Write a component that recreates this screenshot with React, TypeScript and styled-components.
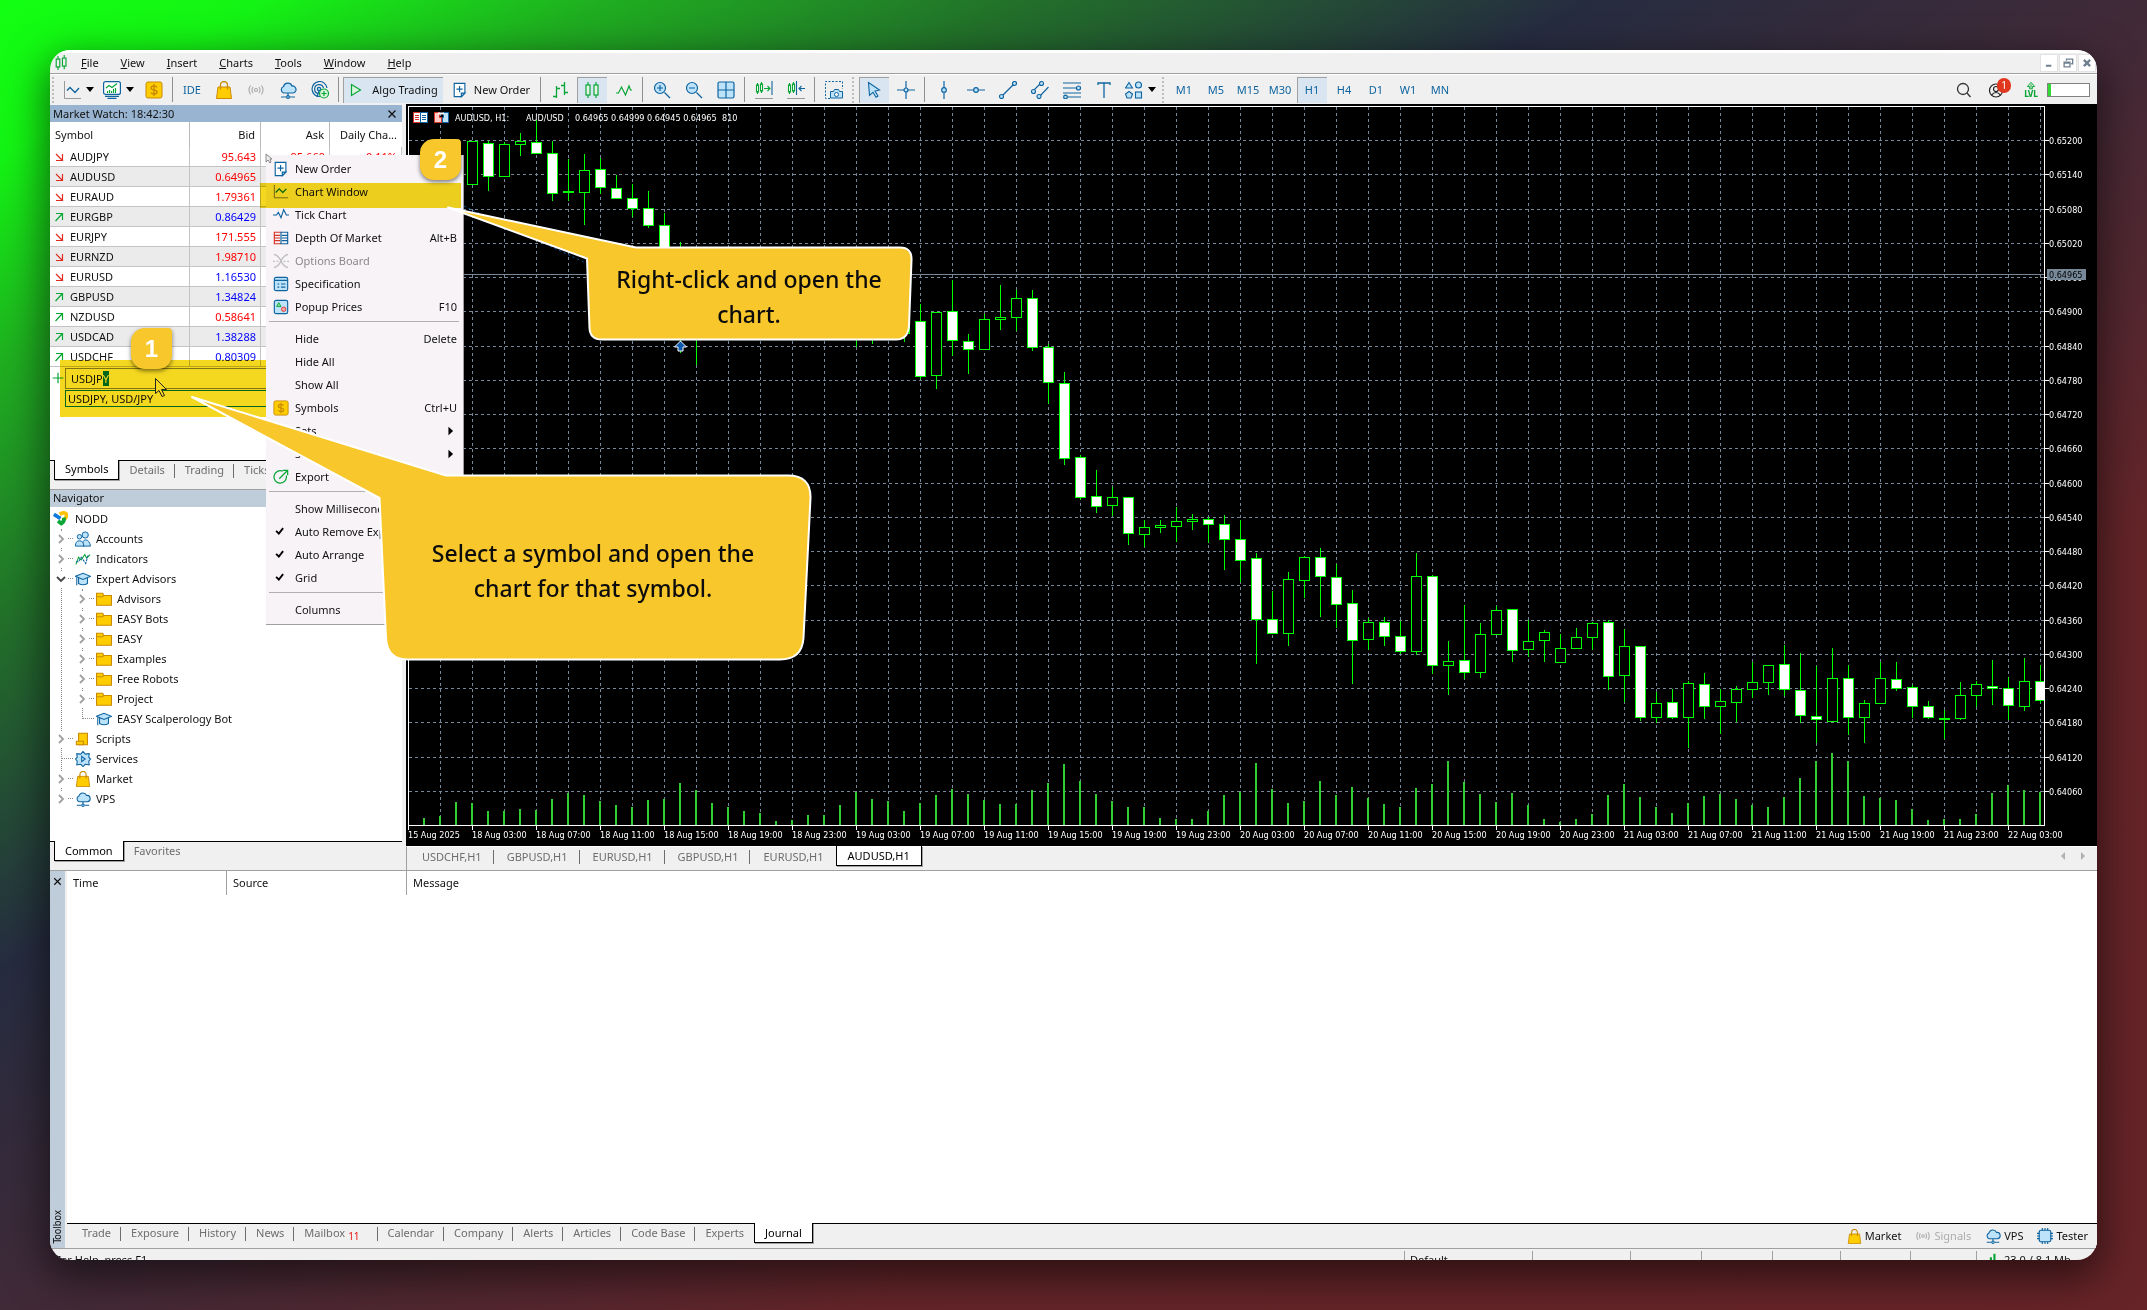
import React, { useEffect, useRef } from "react";
import styled, { createGlobalStyle, css } from "styled-components";

const UI_FONT = `"Noto Sans", "Open Sans", sans-serif`;
const CHART_FONT = `"DejaVu Sans Condensed", "DejaVu Sans", sans-serif`;
const BLUE = "#0f64a0";
const SKY = "#bde3fb";
const GREEN = "#08a537";
const GOLD = "#ffcc00";
const AMBER = "#c98a06";
const FACE = "#f0f0f0";

const GlobalStyle = createGlobalStyle`
  * { box-sizing: border-box; }
  body { margin: 0; }
  button, input { font: inherit; color: inherit; border: 0; padding: 0; margin: 0; background: none; }
  ul { list-style: none; margin: 0; padding: 0; }
  table { border-spacing: 0; border-collapse: separate; }
  svg { display: block; flex: none; }
`;

/* ---------- icons ---------- */

const glyphs: Record<string, React.ReactNode> = {
  app: (
    <g fill="none" stroke={GREEN} strokeWidth="1.3">
      <path d="M4.5 1v4M4.5 13v4M11.5 0v3M11.5 12v4" />
      <rect x="2.5" y="4.5" width="4" height="9" />
      <rect x="9.5" y="3.5" width="4" height="9" />
    </g>
  ),
  lineAxis: (
    <g fill="none">
      <path d="M1.5 0v17.5H18" stroke="#9a9a9a" />
      <path d="M4 9.500l3-3 5 5 4-4.500" stroke={BLUE} strokeWidth="1.3" />
    </g>
  ),
  lineAxisGreen: (
    <g fill="none">
      <path d="M1.500 1v14.500H17" stroke="#6d6d6d" />
      <path d="M3 9.500l4-4 4 4 4-4" stroke="#0a7a2a" strokeWidth="1.500" />
    </g>
  ),
  profile: (
    <g fill="none" stroke={BLUE} strokeWidth="1.2">
      <rect x="0.600" y="0.600" width="16.800" height="12.800" rx="2" fill="#fff" />
      <path d="M2 15.300h14M4.500 17.400h9" />
      <path d="M3 7l3-2.500 3 2 5-4" stroke={GREEN} />
      <path d="M4.500 12v-2M6.500 12v-3M8.500 12v-2M10.500 12V8M12.500 12V7" stroke={GREEN} />
    </g>
  ),
  dollar: (
    <g>
      <rect x="1" y="1" width="16" height="16" rx="2" fill={GOLD} stroke={AMBER} />
      <path d="M12 6.500c-.5-1-1.500-1.500-3-1.500-4 0-4 3.500 0 4s4 4 0 4c-1.500 0-2.500-.5-3-1.500M9 3v12" fill="none" stroke={AMBER} strokeWidth="1.400" />
    </g>
  ),
  bag: (
    <g>
      <path d="M3 6h12l1.500 11.500h-15z" fill={GOLD} stroke={AMBER} />
      <path d="M5.500 8.500V4a3.500 3.500 0 0 1 7 0v4.500" fill="none" stroke={AMBER} strokeWidth="1.300" />
    </g>
  ),
  signal: (
    <g fill="none" stroke="#adadad" strokeWidth="1.200">
      <circle cx="9" cy="9" r="1.500" />
      <path d="M6 6q-2 3 0 6M12 6q2 3 0 6M3.500 4.500q-3 4.500 0 9M14.500 4.500q3 4.500 0 9" />
    </g>
  ),
  cloud: (
    <g fill={SKY} stroke={BLUE} strokeWidth="1.200">
      <path d="M4.500 12a3.500 3.500 0 0 1 0-6.500A4.500 4.500 0 0 1 13 5a3.500 3.500 0 0 1 1 7z" />
      <path d="M9 12v3M2 16h5M11 16h5" />
      <circle cx="9" cy="16" r="1.400" />
    </g>
  ),
  globe: (
    <g fill="none" stroke={BLUE} strokeWidth="1.200">
      <path d="M9 15.500A7.500 7.500 0 1 1 16 7M7 12.500A4.500 4.500 0 1 1 12.500 7" />
      <circle cx="8" cy="8" r="1.700" fill={SKY} />
      <path d="M8 10l-2 6" />
      <circle cx="13" cy="12.500" r="4.500" fill="#d8f5dc" stroke={GREEN} />
      <path d="M10.500 12.500h5M13 10v5" stroke={GREEN} />
    </g>
  ),
  play: <path d="M3.500 3.500v11l9-5.500z" fill="#d8f5dc" stroke={GREEN} strokeWidth="1.200" />,
  newOrder: (
    <g fill="#fff" stroke={BLUE} strokeWidth="1.300">
      <path d="M2.500 1.500h12v11l-4 4h-8z" />
      <path d="M14.500 12.500h-4v4z" fill={SKY} />
      <path d="M8.500 4.500v7M5 8h7" />
    </g>
  ),
  barsChart: (
    <g fill="none" stroke={GREEN} strokeWidth="1.300">
      <path d="M5.500 5v12M5.500 7.500H9M2 15.500h3.500M13.500 1v13M10 4.500h3.500M13.500 11.500H17" />
    </g>
  ),
  candles: (
    <g fill="#e6f6e6" stroke={GREEN} strokeWidth="1.200">
      <path d="M5 1v16M13 1v16" />
      <rect x="3" y="4" width="4" height="10" />
      <rect x="11" y="4" width="4" height="10" />
    </g>
  ),
  zigzag: <path d="M1 12h2.500l3-6 4 8 3.500-9 1.500 4H17" fill="none" stroke={GREEN} strokeWidth="1.200" />,
  zoomIn: (
    <g fill={SKY} stroke={BLUE} strokeWidth="1.200">
      <path d="M11.500 11.500l5.500 5.500" />
      <circle cx="7" cy="7" r="5.500" />
      <path d="M4 7h6M7 4v6" />
    </g>
  ),
  zoomOut: (
    <g fill={SKY} stroke={BLUE} strokeWidth="1.200">
      <path d="M11.500 11.500l5.500 5.500" />
      <circle cx="7" cy="7" r="5.500" />
      <path d="M4 7h6" />
    </g>
  ),
  tiles: (
    <g fill={SKY} stroke={BLUE} strokeWidth="1.200">
      <rect x="1" y="1" width="16" height="16" rx="1.500" />
      <path d="M9 1v16M1 9h16" />
    </g>
  ),
  autoScroll: (
    <g fill="none" stroke={GREEN} strokeWidth="1.100">
      <path d="M2.500 2v11M6.500 1v11M9 7.500h6M12.500 5l2.500 2.500L12.500 10" />
      <rect x="1.500" y="4" width="2" height="7" fill="#fff" />
      <rect x="5.500" y="3" width="2" height="7" fill="#fff" />
      <path d="M17 0v14" stroke={BLUE} />
      <path d="M0 17.500h18" stroke="#9a9a9a" />
    </g>
  ),
  chartShift: (
    <g fill="none" stroke={GREEN} strokeWidth="1.100">
      <path d="M2.500 2v11M6.500 1v11" />
      <rect x="1.500" y="4" width="2" height="7" fill="#fff" />
      <rect x="5.500" y="3" width="2" height="7" fill="#fff" />
      <path d="M9.500 0v14M12 7.500h6M14.500 5L12 7.500l2.500 2.500" stroke={BLUE} />
      <path d="M0 17.500h18" stroke="#9a9a9a" />
    </g>
  ),
  camera: (
    <g fill="none" stroke={BLUE}>
      <path d="M5 17.500H0.500V0.500h17V8" strokeDasharray="2 1.500" />
      <path d="M5.500 17v-6.500h3l1-2h4l1 2h3V17z" fill={SKY} />
      <circle cx="11.500" cy="13.500" r="2" fill="#fff" />
    </g>
  ),
  arrow: <path d="M3.500 1.500l11 7.500-4.500 1 3 5-2 1.300-3-5-3.500 3z" fill={SKY} stroke={BLUE} strokeWidth="1.100" />,
  crosshair: (
    <g fill={SKY} stroke={BLUE} strokeWidth="1.200">
      <path d="M9 0v18M0 9h18" />
      <circle cx="9" cy="9" r="2" />
    </g>
  ),
  vline: (
    <g fill={SKY} stroke={BLUE} strokeWidth="1.200">
      <path d="M9 0v18" />
      <circle cx="9" cy="9" r="2.300" />
    </g>
  ),
  hline: (
    <g fill={SKY} stroke={BLUE} strokeWidth="1.200">
      <path d="M0 9h18" />
      <circle cx="9" cy="9" r="2.300" />
    </g>
  ),
  trend: (
    <g fill={SKY} stroke={BLUE} strokeWidth="1.200">
      <path d="M2 16L16 2" />
      <circle cx="2.500" cy="15.500" r="2" />
      <circle cx="15.500" cy="2.500" r="2" />
    </g>
  ),
  channel: (
    <g fill={SKY} stroke={BLUE} strokeWidth="1.100">
      <path d="M2 10l8-8M8 16l9.500-10" />
      <circle cx="2.500" cy="10.500" r="2" />
      <circle cx="10.500" cy="2.500" r="2" />
      <circle cx="8" cy="15.500" r="2" />
    </g>
  ),
  fibo: (
    <g fill={SKY} stroke={BLUE} strokeWidth="1.200">
      <path d="M0 2h18M0 7h18M0 12h18M3 16h15" />
      <circle cx="15.500" cy="7" r="2" />
      <circle cx="2.500" cy="16" r="1.800" />
    </g>
  ),
  text: <path d="M3 4V2h12v2M9 2v15" fill="none" stroke={BLUE} strokeWidth="1.300" />,
  shapes: (
    <g fill={SKY} stroke={BLUE} strokeWidth="1.100">
      <path d="M4 1.500L7.500 7h-7z" />
      <circle cx="13.500" cy="4" r="3" />
      <path d="M4 10.500l3.500 2.500-1.500 4H2l-1.500-4z" />
      <rect x="10.500" y="11" width="6" height="6" />
    </g>
  ),
  search: (
    <g fill="none" stroke="#333" strokeWidth="1.300">
      <circle cx="8" cy="8" r="5.500" />
      <path d="M12 12l3.500 4" />
    </g>
  ),
  user: (
    <g fill="none" stroke="#222" strokeWidth="1.200">
      <circle cx="9" cy="9.500" r="6.500" />
      <circle cx="9" cy="8" r="2.500" />
      <path d="M4.500 14q4.500-5 9 0" />
    </g>
  ),
  levelUp: <path d="M6.500 14V10H2.500l6.500-7.500 6.500 7.500h-4v4zM9 6v6" fill="none" stroke={GREEN} strokeWidth="1.800" />,
  tick: <path d="M0 9h4l2-3 3 6 3-9 3 6h3" fill="none" stroke={BLUE} strokeWidth="1.300" />,
  depth: (
    <g fill="none">
      <path d="M9 2.500H1.500v13H9M2 6h6M2 9h6M2 12h6" stroke="#d8352b" strokeWidth="1.300" />
      <path d="M9 2.500h7.500v13H9zM10 6h6M10 9h6M10 12h6" stroke={BLUE} strokeWidth="1.300" />
    </g>
  ),
  options: (
    <g fill="none" stroke="#bdbdbd" strokeWidth="1.500">
      <path d="M1 1.500q5 1 8 7.500t8 7.500M17 1.500q-5 1-8 7.500t-8 7.500" />
      <path d="M0 9.500h18" strokeDasharray="2 2" />
    </g>
  ),
  spec: (
    <g fill={SKY} stroke={BLUE} strokeWidth="1.300">
      <rect x="1.500" y="1.500" width="15" height="15" rx="2" />
      <path d="M2 5h14M5 9h2M9 9h5M5 12.500h2M9 12.500h5" />
    </g>
  ),
  popup: (
    <g fill={SKY} stroke={BLUE} strokeWidth="1.300">
      <rect x="1.500" y="1.500" width="15" height="15" rx="2" />
      <path d="M6.500 4L4 8.500h5z" fill="#8fdc9c" stroke={GREEN} strokeWidth="1" />
      <circle cx="12" cy="11.500" r="2.500" fill="#f7a5a5" stroke="#d8352b" strokeWidth="1" />
    </g>
  ),
  exportIcon: (
    <g fill="none" stroke={GREEN} strokeWidth="1.400">
      <path d="M11 2.500a7 7 0 1 0 4 5M7 11L16 2M11 1.500h5.500V7" />
    </g>
  ),
  check: <path d="M4 7.500l3.500 3.500L13 4" fill="none" stroke="#000" strokeWidth="2.400" />,
  submenu: <path d="M7 3.500l6 5.500-6 5.500z" fill="#000" />,
  brand: (
    <g strokeWidth="4.500" fill="none">
      <path d="M1 4l8 5" stroke="#1279dc" />
      <path d="M8 4q6-4 9 1l-3 5" stroke="#ffc20a" />
      <path d="M6 12l4 3q4-2 3-7" stroke="#0aa537" />
    </g>
  ),
  accounts: (
    <g fill={SKY} stroke={BLUE} strokeWidth="1.100">
      <circle cx="11.500" cy="4.500" r="3.500" />
      <path d="M9 17q-1-7 3-7t5.500 7z" />
      <circle cx="5" cy="6.500" r="2.500" />
      <path d="M0.500 17q0-6 4.500-6t5 6z" />
    </g>
  ),
  indicators: (
    <g fill="none" strokeWidth="1.200">
      <path d="M1 15l3-8 3 3 4-6 2 4 4-4" stroke={GREEN} />
      <path d="M1 12h3l3-5 5 7 3-10" stroke={BLUE} strokeDasharray="3 1" />
    </g>
  ),
  hat: (
    <g fill={SKY} stroke={BLUE} strokeWidth="1.200">
      <path d="M4 7v7q5 3 10 0V7" />
      <path d="M0.500 6L9 2.500 17.500 6 9 9.500z" />
      <path d="M2 7v9" />
    </g>
  ),
  folder: (
    <g fill={GOLD} stroke={AMBER} strokeWidth="1.200">
      <path d="M0.600 16V2.500h7l1 2.500h8.800v11z" />
      <path d="M1 6.500h6.500l1-1.500" fill="none" />
    </g>
  ),
  scroll: (
    <g fill={GOLD} stroke={AMBER} strokeWidth="1.200">
      <path d="M4 2.500h10v13H4z" />
      <path d="M1.500 11.500h8v4h-8z" />
    </g>
  ),
  services: (
    <g fill={SKY} stroke={BLUE} strokeWidth="1.200">
      <path d="M9 0.500l2.500 3 4.500-.5-.5 4 2 2-2 2.500.5 4-4.500-.5-2.500 2.500-2.500-2.500-4.500.5.500-4L.5 9l2-2L2 3l4.500.5z" />
      <path d="M7.500 6v6l4-3z" />
    </g>
  ),
  chip: (
    <g fill={SKY} stroke={BLUE} strokeWidth="1.300">
      <path d="M6 0v18M9 0v18M12 0v18M0 6h18M0 9h18M0 12h18" />
      <rect x="2.500" y="2.500" width="13" height="13" rx="2" />
    </g>
  ),
  traffic: <path d="M2 18v-3M6 18v-7M10 18V7M14 18V3" stroke={GREEN} strokeWidth="2.400" />,
  down: <path d="M6 6l6 6M6 12.500h6.500V6" fill="none" stroke="#e02b20" strokeWidth="1.200" />,
  up: <path d="M5.500 13L12 6M6 5.500h6.500V12" fill="none" stroke={GREEN} strokeWidth="1.200" />,
  plus: <path d="M9 1v16M1 9h16" stroke={GREEN} strokeWidth="1.800" />,
  close: <path d="M4.500 4.500l9 9M13.500 4.500l-9 9" stroke="#111" strokeWidth="1.700" />,
  minimize: <path d="M5 12.500h7" stroke="#708090" strokeWidth="2.500" />,
  restore: <path d="M7 6V4h8v6h-2M4 8h7.500v6H4zM4 9h7" fill="none" stroke="#708090" strokeWidth="1.700" />,
  closeBox: <path d="M5 5l8 8M13 5l-8 8" stroke="#708090" strokeWidth="3" />,
};

const Icon = ({ name, size = 18 }: { name: string; size?: number }) => (
  <svg width={size} height={size} viewBox="0 0 18 18" aria-hidden="true">
    {glyphs[name]}
  </svg>
);

/* ---------- shell ---------- */

const Desktop = styled.main`
  min-height: 100vh;
  padding: 50px;
  background: linear-gradient(to bottom right, #12ff12 0%, #14f414 6%, #1fae20 14%, #226f2a 24%, #262c40 37%, #402a38 50%, #642529 70%, #662428 100%);
  font: 11px/16px ${UI_FONT};
  color: #111;
`;

const AppWindow = styled.div`
  position: relative;
  display: flex;
  flex-direction: column;
  height: calc(100vh - 100px);
  border-radius: 20px;
  overflow: hidden;
  background: ${FACE};
`;

const Shadow = styled.div`
  border-radius: 20px;
  box-shadow: 0 14px 40px 4px rgba(0, 0, 0, 0.55);
`;

const MenuBar = styled.nav`
  display: flex;
  align-items: center;
  height: 24px;
  padding: 0 1px 0 4px;
  border-top: 3px solid #fff;
  border-bottom: 1px solid #a0a0a0;
  flex: none;
`;

const MenuButton = styled.button`
  padding: 0 11px;
  &::first-letter { text-decoration: underline; }
`;

const WindowControls = styled.div`
  display: flex;
  gap: 1px;
  margin-left: auto;
`;

const WindowControl = styled.button`
  display: grid;
  place-items: center;
  width: 18px;
  height: 18px;
  background: #fff;
  border: 1px solid #e2e2e2;
`;

const ToolBar = styled.div`
  display: flex;
  align-items: center;
  height: 30px;
  border-top: 1px solid #fff;
  flex: none;
`;

const Grip = styled.span`
  width: 8px;
  height: 26px;
  background: linear-gradient(90deg, transparent 2px, #bdbdbd 2px, #bdbdbd 4px, transparent 4px);
  mask: repeating-linear-gradient(180deg, #000 0 2px, transparent 2px 4px);
`;

const Separator = styled.span`
  width: 6px;
  height: 25px;
  background: linear-gradient(90deg, transparent 2px, #909090 2px, #909090 3px, transparent 3px);
`;

const pressed = css`
  background: #d9e6f2;
  box-shadow: inset 1px 1px 0 #a0a0a0;
`;

const ToolButton = styled.button<{ $w?: number; $active?: boolean }>`
  display: flex;
  align-items: center;
  justify-content: center;
  gap: 6px;
  width: ${(p) => (p.$w ?? 32) - 2}px;
  height: 26px;
  margin: 0 1px;
  color: ${BLUE};
  ${(p) => p.$active && pressed}
`;

const WideTool = styled(ToolButton)`
  color: #111;
`;

const DropTool = styled(ToolButton)`
  gap: 5px;
  &::after {
    content: "";
    border: 4px solid transparent;
    border-top: 5px solid #000;
    border-bottom: 0;
  }
`;

const ToolTail = styled.div`
  display: flex;
  align-items: center;
  margin-left: auto;
  padding-right: 7px;
`;

const AccountTool = styled(ToolButton)`
  position: relative;
  margin-right: 8px;
`;

const Notice = styled.span`
  position: absolute;
  top: 1px;
  right: 0;
  width: 14px;
  height: 15px;
  border-radius: 7px;
  background: #e2371f;
  color: #fff;
  font-size: 10px;
  line-height: 15px;
`;

const Level = styled.span`
  display: flex;
  flex-direction: column;
  align-items: center;
  width: 24px;
  color: ${GREEN};
  font: bold 8px/8px ${CHART_FONT};
`;

const Battery = styled.span`
  width: 43px;
  height: 14px;
  margin-left: 4px;
  border: 1px solid #808080;
  background: linear-gradient(90deg, #35d935 3px, #fff 3px);
`;

/* ---------- work area ---------- */

const WorkArea = styled.div`
  display: flex;
  gap: 4px;
  flex: 767 1 0;
  min-height: 0;
`;

const SideColumn = styled.aside`
  display: flex;
  flex-direction: column;
  width: 352px;
  flex: none;
`;

const Panel = styled.section<{ $basis: number; $rule?: boolean }>`
  display: flex;
  flex-direction: column;
  flex: 1 1 ${(p) => p.$basis}px;
  min-height: 0;
  border-top: 1px solid ${(p) => (p.$rule ? "#a0a0a0" : FACE)};
`;

const PanelTitle = styled.h2<{ $active?: boolean }>`
  display: flex;
  align-items: center;
  justify-content: space-between;
  height: 17px;
  margin: 0;
  padding: 0 3px;
  background: ${(p) => (p.$active ? "#99b4d1" : "#bfcddb")};
  font-size: 11px;
  font-weight: 400;
  flex: none;
`;

const PanelBody = styled.div`
  flex: 1;
  min-height: 0;
  background: #fff;
`;

const IconButton = styled.button`
  display: grid;
  place-items: center;
`;

const TabStrip = styled.div<{ $h: number; $pad: number }>`
  display: flex;
  align-items: flex-start;
  height: ${(p) => p.$h}px;
  padding-left: ${(p) => p.$pad}px;
  border-top: 1px solid #000;
  background: ${FACE};
  flex: none;
`;

const Tab = styled.button<{ $active?: boolean; $bar?: boolean }>`
  position: relative;
  height: 18px;
  padding: 0 10px;
  line-height: 18px;
  color: #6d6d6d;
  ${(p) =>
    p.$bar &&
    css`
      &::after {
        content: "";
        position: absolute;
        right: 0;
        top: 3px;
        height: 14px;
        border-right: 1px solid #6d6d6d;
      }
    `}
  ${(p) =>
    p.$active &&
    css`
      height: 20px;
      margin-top: -1px;
      background: #fff;
      border: 1px solid #000;
      border-top: 0;
      box-shadow: 1px 1px 0 #a0a0a0;
      color: #000;
    `}
`;

const MailCount = styled.sub`
  margin-left: 3px;
  padding-right: 8px;
  font-size: 10px;
  line-height: 8px;
  color: #e11;
`;

const QuoteTable = styled.table`
  width: 100%;
  table-layout: fixed;
  th { height: 25px; padding: 0 5px; font-weight: 400; text-align: right; border-right: 1px solid #b8b8b8; }
  th:first-child { text-align: left; width: 140px; }
  th:last-child { border-right: 0; }
  th:nth-child(2) { width: 71px; }
  th:nth-child(3) { width: 69px; }
  td { height: 20px; padding: 0 4px; text-align: right; border-bottom: 1px solid #c4c4c4; border-right: 1px solid #c4c4c4; line-height: 19px; }
  td:first-child { text-align: left; padding-left: 0; }
  tbody tr:nth-child(even) { background: #ebebeb; }
`;

const SymbolCell = styled.span`
  display: flex;
  align-items: center;
  gap: 2px;
  height: 19px;
  color: #111;
`;

const Price = styled.td<{ $up: boolean }>`
  color: ${(p) => (p.$up ? "#0000ff" : "#ff0000")};
`;

const AddSymbol = styled.div`
  display: flex;
  align-items: flex-start;
  gap: 1px;
  padding: 1px 0 0 2px;
`;

const AddMark = styled.span`
  padding-top: 4px;
`;

const SymbolEntry = styled.div`
  flex: 1;
`;

const SymbolInput = styled.input`
  display: block;
  width: 100%;
  height: 21px;
  padding: 0 0 1px 5px;
  border: 1px solid #8a8a8a;
  outline: 0;
  &::selection { background: #0078d7; color: #fff; }
`;

const Suggestion = styled.div`
  height: 17px;
  margin-top: 1px;
  padding-left: 2px;
  border: 1px solid #0078d7;
  line-height: 15px;
`;

const Tree = styled.ul<{ $x: number }>`
  position: relative;
  &::before {
    content: "";
    position: absolute;
    left: ${(p) => p.$x}px;
    top: 0;
    bottom: 10px;
    border-left: 1px dotted #8a8a8a;
  }
`;

const TreeRoot = styled.div`
  display: flex;
  align-items: center;
  gap: 7px;
  height: 20px;
  margin-top: 2px;
  padding-left: 3px;
`;

const TreeRow = styled.div<{ $indent: number }>`
  display: flex;
  align-items: center;
  height: 20px;
  padding-left: ${(p) => p.$indent}px;
`;

const Twisty = styled.button`
  position: relative;
  display: grid;
  place-items: center;
  width: 12px;
  height: 16px;
  background: #fff;
`;

const Dots = styled.span`
  width: 5px;
  margin: 0 2px 0 1px;
  border-top: 1px dotted #8a8a8a;
`;

const LeafDots = styled(Dots)`
  width: 11px;
  margin-left: 7px;
`;

const TreeLabel = styled.span`
  margin-left: 5px;
`;

const ChartColumn = styled.section`
  display: flex;
  flex-direction: column;
  flex: 1;
  min-width: 0;
`;

const ChartCanvas = styled.svg`
  width: 100%;
  flex: 1;
  min-height: 0;
  background: #000;
  font: 9px ${CHART_FONT};
`;

const ChartTabs = styled(TabStrip)`
  border-top: 1px solid #fff;
  border-left: 1px solid #a0a0a0;
`;

const ChartTab = styled(Tab)`
  padding: 0 12px 0 13px;
  line-height: 19px;
  ${(p) => p.$active && "padding: 0 11px;"}
`;

const Pager = styled.span`
  display: flex;
  gap: 16px;
  margin: 5px 12px 0 auto;
`;

/* ---------- toolbox ---------- */

const Toolbox = styled.section`
  display: flex;
  flex: 377 1 0;
  min-height: 0;
  border-top: 1px solid #a0a0a0;
`;

const ToolboxRail = styled.div`
  display: flex;
  flex-direction: column;
  align-items: center;
  justify-content: space-between;
  width: 15px;
  margin-right: 2px;
  padding: 4px 0;
  background: #bfcddb;
`;

const RailLabel = styled.span`
  writing-mode: vertical-rl;
  transform: rotate(180deg);
  font: 10px/15px ${CHART_FONT};
`;

const ToolboxBody = styled.div`
  display: flex;
  flex-direction: column;
  flex: 1;
  min-width: 0;
  background: #fff;
`;

const JournalTable = styled.table`
  width: 100%;
  table-layout: fixed;
  th { height: 24px; padding: 0 6px; text-align: left; font-weight: 400; border-right: 1px solid #a0a0a0; }
  th:nth-child(1) { width: 160px; }
  th:nth-child(2) { width: 180px; }
  th:nth-child(3) { border-right: 0; }
`;

const Fill = styled.div`
  flex: 1;
`;

const LinkGroup = styled.div`
  display: flex;
  gap: 14px;
  margin: 4px 9px 0 auto;
`;

const ServiceLink = styled.button<{ $off?: boolean }>`
  display: flex;
  align-items: center;
  gap: 3px;
  color: ${(p) => (p.$off ? "#adadad" : "#111")};
`;

const StatusBar = styled.footer`
  display: flex;
  height: 12px;
  overflow: hidden;
  border-top: 1px solid #a0a0a0;
  white-space: nowrap;
  flex: none;
`;

const StatusCell = styled.span<{ $w?: number }>`
  display: flex;
  gap: 6px;
  height: 20px;
  padding-left: 5px;
  margin-top: 2px;
  border-left: 1px solid #a0a0a0;
  line-height: 17px;
  ${(p) => (p.$w ? `width: ${p.$w}px;` : "flex: 1; border-left: 0;")}
`;

/* ---------- overlays ---------- */

const ContextMenu = styled.ul`
  position: absolute;
  left: 216px;
  top: 105px;
  width: 198px;
  padding: 2px 0 3px;
  background: #f7f3f7;
  border-right: 1px solid #a0a0a0;
  border-bottom: 1px solid #a0a0a0;
`;

const MenuItem = styled.button`
  display: flex;
  align-items: center;
  width: 100%;
  height: 23px;
  padding: 0 6px 0 7px;
  text-align: left;
  &:disabled { color: #8a8a8a; }
`;

const ItemIcon = styled.span`
  width: 22px;
`;

const Shortcut = styled.span`
  margin-left: auto;
`;

const MenuRule = styled.li`
  height: 9px;
  margin: 0 4px 0 3px;
  background: linear-gradient(transparent 3px, #b0b0b0 3px, #b0b0b0 4px, transparent 4px);
`;

const Highlight = styled.div<{ $x: number; $y: number; $w: number; $h: number }>`
  position: absolute;
  left: ${(p) => p.$x}px;
  top: ${(p) => p.$y}px;
  width: ${(p) => p.$w}px;
  height: ${(p) => p.$h}px;
  background: #f4d820;
  mix-blend-mode: multiply;
  pointer-events: none;
`;

const StepBadge = styled.div<{ $x: number; $y: number }>`
  position: absolute;
  left: ${(p) => p.$x}px;
  top: ${(p) => p.$y}px;
  width: 41px;
  height: 41px;
  border-radius: 14px 4px 14px 14px;
  background: #f8c72b;
  box-shadow: 0 2px 4px rgba(0, 0, 0, 0.5);
  color: #fff;
  font: bold 24px/42px "Liberation Sans", Arial, sans-serif;
  text-align: center;
`;

const Overlay = styled.svg`
  position: absolute;
  left: 0;
  top: 0;
  pointer-events: none;
`;

const CalloutText = styled.p<{ $x: number; $y: number; $w: number }>`
  position: absolute;
  left: ${(p) => p.$x}px;
  top: ${(p) => p.$y}px;
  width: ${(p) => p.$w}px;
  margin: 0;
  color: #0c0c0c;
  font: 500 23px/35px ${UI_FONT};
  text-align: center;
`;

/* ---------- data ---------- */

const quotes: [string, string, boolean, boolean][] = [
  ["AUDJPY", "95.643", false, false],
  ["AUDUSD", "0.64965", false, false],
  ["EURAUD", "1.79361", false, false],
  ["EURGBP", "0.86429", true, true],
  ["EURJPY", "171.555", false, false],
  ["EURNZD", "1.98710", false, false],
  ["EURUSD", "1.16530", false, true],
  ["GBPUSD", "1.34824", true, true],
  ["NZDUSD", "0.58641", true, false],
  ["USDCAD", "1.38288", true, true],
  ["USDCHF", "0.80309", true, true],
];

type Candle = [number, number, number, number, number, 0 | 1];
// slot, wick top, body top, body bottom, wick bottom, filled
const candles: Candle[] = [
  [4, 141, 141, 185, 185, 0], [5, 141, 143, 177, 191, 1], [6, 142, 144, 177, 177, 0], [7, 133, 141, 145, 156, 0],
  [8, 120, 142, 154, 154, 1], [9, 141, 153, 194, 201, 1], [10, 159, 191, 193, 201, 0], [11, 154, 170, 193, 225, 0],
  [12, 158, 169, 188, 194, 1], [13, 175, 188, 199, 199, 1], [14, 184, 198, 209, 217, 1], [15, 191, 208, 226, 228, 1],
  [16, 213, 225, 280, 300, 1], [17, 242, 280, 300, 353, 1], [18, 280, 290, 320, 365, 1], [28, 300, 310, 330, 347, 0],
  [29, 300, 310, 330, 344, 0], [31, 318, 322, 334, 342, 0], [32, 304, 321, 377, 379, 1], [33, 312, 312, 376, 389, 0],
  [34, 280, 311, 341, 356, 1], [35, 334, 341, 350, 374, 1], [36, 314, 319, 350, 350, 0], [37, 285, 317, 320, 330, 0],
  [38, 290, 298, 318, 331, 0], [39, 290, 298, 348, 351, 1], [40, 344, 347, 383, 404, 1], [41, 372, 383, 459, 465, 1],
  [42, 455, 457, 498, 500, 1], [43, 470, 496, 507, 513, 1], [44, 487, 497, 506, 516, 0], [45, 497, 497, 534, 545, 1],
  [46, 520, 527, 535, 547, 0], [47, 520, 525, 528, 533, 0], [48, 507, 521, 527, 542, 0], [49, 514, 519, 522, 530, 0],
  [50, 517, 519, 525, 543, 1], [51, 515, 524, 540, 570, 1], [52, 520, 539, 561, 582, 1], [53, 553, 558, 620, 664, 1],
  [54, 591, 619, 634, 634, 1], [55, 572, 579, 634, 646, 0], [56, 556, 557, 581, 598, 0], [57, 548, 557, 577, 617, 1],
  [58, 564, 577, 605, 628, 1], [59, 590, 603, 641, 684, 1], [60, 618, 622, 640, 650, 0], [61, 617, 622, 637, 646, 1],
  [62, 621, 636, 652, 654, 1], [63, 553, 576, 652, 655, 0], [64, 575, 576, 666, 674, 1], [65, 641, 661, 666, 695, 0],
  [66, 605, 660, 673, 679, 1], [67, 623, 634, 673, 678, 0], [68, 606, 610, 635, 635, 0], [69, 609, 609, 651, 662, 1],
  [70, 620, 641, 650, 657, 0], [71, 630, 632, 641, 662, 0], [72, 634, 648, 663, 663, 0], [73, 628, 637, 649, 649, 0],
  [74, 622, 623, 638, 650, 0], [75, 620, 622, 677, 690, 1], [76, 629, 646, 676, 702, 0], [77, 646, 646, 718, 721, 1],
  [78, 692, 703, 718, 723, 0], [79, 689, 702, 718, 719, 1], [80, 681, 683, 718, 748, 0], [81, 673, 684, 707, 719, 1],
  [82, 689, 701, 707, 734, 0], [83, 686, 689, 703, 722, 0], [84, 662, 682, 690, 698, 0], [85, 665, 665, 683, 695, 0],
  [86, 645, 664, 690, 696, 1], [87, 653, 690, 716, 723, 1], [88, 666, 716, 720, 743, 1], [89, 648, 678, 722, 722, 0],
  [90, 665, 678, 718, 735, 1], [91, 700, 703, 718, 743, 0], [92, 662, 678, 704, 704, 0], [93, 662, 679, 689, 691, 1],
  [94, 685, 687, 707, 718, 1], [95, 701, 706, 718, 719, 1], [96, 710, 718, 720, 739, 0], [97, 682, 695, 719, 720, 0],
  [98, 681, 684, 696, 707, 0], [99, 660, 686, 689, 705, 1], [100, 677, 688, 706, 720, 1], [101, 658, 681, 707, 711, 0],
  [102, 665, 681, 701, 703, 1],
];

const volumes = [
  7, 9, 23, 22, 14, 14, 16, 15, 26, 32, 30, 24, 20, 18, 25, 26, 42, 35, 22, 18, 14, 12, 4, 5, 10, 10, 20, 33, 26, 24, 14,
  22, 30, 36, 31, 25, 21, 21, 35, 42, 61, 44, 31, 24, 18, 18, 7, 6, 6, 14, 30, 33, 62, 36, 22, 24, 44, 30, 38, 27, 21, 18,
  37, 41, 64, 43, 31, 23, 32, 20, 6, 3, 6, 11, 30, 41, 28, 18, 12, 22, 29, 31, 26, 20, 18, 28, 47, 64, 72, 64, 29, 27, 25,
  16, 5, 6, 6, 11, 32, 40, 35, 33,
];

const hours = ["03:00", "07:00", "11:00", "15:00", "19:00", "23:00"];
const times = ["15 Aug 2025", ...[18, 19, 20, 21].flatMap((d) => hours.map((h) => `${d} Aug ${h}`)), "22 Aug 03:00"];

const rowY = (i: number) => 140 + Math.round((i * 651) / 19);
const slotX = (k: number) => 408 + 16 * k;

const Chart = () => (
  <ChartCanvas viewBox="406 104 1691 743" preserveAspectRatio="xMinYMin slice" role="img" aria-label="AUDUSD, H1">
    <g stroke="#778899" strokeDasharray="3 3" shapeRendering="crispEdges">
      {Array.from({ length: 51 }, (_, i) => (
        <path key={i} d={`M${440.5 + i * 32} 107V825`} />
      ))}
      {Array.from({ length: 20 }, (_, i) => (
        <path key={i} d={`M409 ${rowY(i) + 0.5}H2044`} />
      ))}
    </g>
    <path d="M409 274.500H2044" stroke="#778899" />
    <path d="M464 206L586 263" stroke="#0a58b0" strokeDasharray="2 3" />
    <g fill="#32cd32" shapeRendering="crispEdges">
      {volumes.map((h, i) => (
        <rect key={i} x={slotX(i + 1) - 1} y={825 - h} width="2" height={h} />
      ))}
    </g>
    <g stroke="#00ff00" shapeRendering="crispEdges">
      {candles.map(([k, wt, t, b, wb, filled]) => {
        const x = slotX(k);
        const right = Math.min(x + 5.5, 2044);
        return (
          <g key={k}>
            <path d={`M${x + 0.5} ${wt}V${t}M${x + 0.5} ${b}V${wb}`} />
            <rect x={x - 4.5} y={t + 0.5} width={right - x + 4.5} height={b - t - 1} fill={filled ? "#fff" : "#000"} />
          </g>
        );
      })}
    </g>
    <path d="M680.500 341l6 6h-3.500v4h-5v-4h-3.500z" fill="#0a58b0" stroke="#fff" />
    <path d="M408.500 825V106.500H2044.500V825.500H408" fill="none" stroke="#fff" shapeRendering="crispEdges" />
    <g fill="#fff">
      {Array.from({ length: 20 }, (_, i) => (
        <g key={i}>
          <rect x="2045" y={rowY(i)} width="4" height="1" />
          <text x="2049" y={rowY(i) + 4}>{((65200 - i * 60) / 100000).toFixed(5)}</text>
        </g>
      ))}
      {times.map((t, i) => (
        <g key={t}>
          <rect x={408 + i * 64} y="826" width="1" height="4" />
          <text x={408 + i * 64} y="838">{t}</text>
        </g>
      ))}
    </g>
    <rect x="2047" y="269" width="39" height="11" fill="#778899" />
    <text x="2049" y="278" fill="#000">0.64965</text>
    <g shapeRendering="crispEdges">
      <rect x="413" y="112" width="15" height="11" fill="#fff" />
      <path d="M420.500 112.500H413.500V122.500H420.500M415 115.500h4M415 117.500h4M415 119.500h4" fill="none" stroke="#d8352b" />
      <path d="M420.500 112.500H427.500V122.500H420.500zM422 115.500h4M422 117.500h4M422 119.500h4" fill="none" stroke={BLUE} />
    </g>
    <g>
      <path d="M434.500 112.500h5v5h2v5h-7z" fill="#ffc9c4" stroke="#d8352b" />
      <path d="M448.500 112.500h-5v5h-1v5h6z" fill={SKY} stroke={BLUE} />
      <path d="M438 113.500h6" stroke="#fff" strokeWidth="2" />
    </g>
    <text y="121" fill="#fff">
      <tspan x="455">AUDUSD, H1:</tspan>
      <tspan x="526">AUD/USD</tspan>
      <tspan x="575">0.64965 0.64999 0.64945 0.64965</tspan>
      <tspan x="722">810</tspan>
    </text>
  </ChartCanvas>
);

const Chevron = ({ open }: { open?: boolean }) => (
  <svg width="10" height="10" viewBox="0 0 10 10" aria-hidden="true">
    <path d={open ? "M1 3l4 4 4-4" : "M3 1l4 4-4 4"} fill="none" stroke={open ? "#444" : "#a0a0a0"} strokeWidth="1.800" />
  </svg>
);

type NodeProps = { icon: string; label: string; indent?: number; open?: boolean; leaf?: boolean };

const Node = ({ icon, label, indent = 5, open, leaf }: NodeProps) => (
  <TreeRow $indent={indent}>
    {leaf ? (
      <LeafDots />
    ) : (
      <>
        <Twisty aria-label={`Toggle ${label}`}>
          <Chevron open={open} />
        </Twisty>
        <Dots />
      </>
    )}
    <Icon name={icon} size={16} />
    <TreeLabel>{label}</TreeLabel>
  </TreeRow>
);

const folders = ["Advisors", "EASY Bots", "EASY", "Examples", "Free Robots", "Project"];

type Entry = { label: string; icon?: string; keys?: string; off?: boolean; sub?: boolean } | null;
const entries: Entry[] = [
  { label: "New Order", icon: "newOrder" },
  { label: "Chart Window", icon: "lineAxisGreen" },
  { label: "Tick Chart", icon: "tick" },
  { label: "Depth Of Market", icon: "depth", keys: "Alt+B" },
  { label: "Options Board", icon: "options", off: true },
  { label: "Specification", icon: "spec" },
  { label: "Popup Prices", icon: "popup", keys: "F10" },
  null,
  { label: "Hide", keys: "Delete" },
  { label: "Hide All" },
  { label: "Show All" },
  { label: "Symbols", icon: "dollar", keys: "Ctrl+U" },
  { label: "Sets", sub: true },
  { label: "Sort", sub: true },
  { label: "Export", icon: "exportIcon" },
  null,
  { label: "Show Milliseconds" },
  { label: "Auto Remove Expired", icon: "check" },
  { label: "Auto Arrange", icon: "check" },
  { label: "Grid", icon: "check" },
  null,
  { label: "Columns" },
];

const MarketWatch = () => {
  const entry = useRef<HTMLInputElement>(null);
  useEffect(() => {
    entry.current?.focus({ preventScroll: true });
    entry.current?.setSelectionRange(5, 6);
  }, []);
  return (
    <Panel $basis={385}>
      <PanelTitle $active>
        Market Watch: 18:42:30
        <IconButton aria-label="Close Market Watch"><Icon name="close" size={14} /></IconButton>
      </PanelTitle>
      <PanelBody>
        <QuoteTable>
          <thead>
            <tr><th>Symbol</th><th>Bid</th><th>Ask</th><th>Daily Cha...</th></tr>
          </thead>
          <tbody>
            {quotes.map(([name, bid, rising, blue], i) => (
              <tr key={name}>
                <td><SymbolCell><Icon name={rising ? "up" : "down"} />{name}</SymbolCell></td>
                <Price $up={blue}>{bid}</Price>
                <Price $up={blue}>{i === 0 ? "95.669" : ""}</Price>
                <Price $up={blue}>{i === 0 ? "-0.11%" : ""}</Price>
              </tr>
            ))}
          </tbody>
        </QuoteTable>
        <AddSymbol>
          <AddMark><Icon name="plus" size={12} /></AddMark>
          <SymbolEntry>
            <SymbolInput ref={entry} aria-label="Add symbol" defaultValue="USDJPY" />
            <Suggestion>USDJPY, USD/JPY</Suggestion>
          </SymbolEntry>
        </AddSymbol>
      </PanelBody>
      <TabStrip $h={29} $pad={4}>
        <Tab $active>Symbols</Tab>
        <Tab $bar>Details</Tab>
        <Tab $bar>Trading</Tab>
        <Tab>Ticks</Tab>
      </TabStrip>
    </Panel>
  );
};

const Navigator = () => (
  <Panel $basis={382} $rule>
    <PanelTitle>Navigator</PanelTitle>
    <PanelBody>
      <TreeRoot><Icon name="brand" size={15} />NODD</TreeRoot>
      <Tree $x={11}>
        <li><Node icon="accounts" label="Accounts" /></li>
        <li><Node icon="indicators" label="Indicators" /></li>
        <li>
          <Node icon="hat" label="Expert Advisors" open />
          <Tree $x={32}>
            {folders.map((f) => (
              <li key={f}><Node icon="folder" label={f} indent={26} /></li>
            ))}
            <li><Node icon="hat" label="EASY Scalperology Bot" indent={26} leaf /></li>
          </Tree>
        </li>
        <li><Node icon="scroll" label="Scripts" /></li>
        <li><Node icon="services" label="Services" leaf /></li>
        <li><Node icon="bag" label="Market" /></li>
        <li><Node icon="cloud" label="VPS" /></li>
      </Tree>
    </PanelBody>
    <TabStrip $h={29} $pad={4}>
      <Tab $active>Common</Tab>
      <Tab>Favorites</Tab>
    </TabStrip>
  </Panel>
);

const Tool = ({ icon, active }: { icon: string; active?: boolean }) => (
  <ToolButton $active={active} aria-label={icon}><Icon name={icon} /></ToolButton>
);

const toolboxTabs = ["Trade", "Exposure", "History", "News", "Mailbox", "Calendar", "Company", "Alerts", "Articles", "Code Base", "Experts", "Journal"];
const chartTabs = ["USDCHF,H1", "GBPUSD,H1", "EURUSD,H1", "GBPUSD,H1", "EURUSD,H1", "AUDUSD,H1"];

export default function App() {
  return (
    <Desktop>
      <GlobalStyle />
      <Shadow>
        <AppWindow>
          <MenuBar>
            <Icon name="app" size={16} />
            {["File", "View", "Insert", "Charts", "Tools", "Window", "Help"].map((m) => (
              <MenuButton key={m}>{m}</MenuButton>
            ))}
            <WindowControls>
              <WindowControl aria-label="Minimize"><Icon name="minimize" size={14} /></WindowControl>
              <WindowControl aria-label="Restore"><Icon name="restore" size={14} /></WindowControl>
              <WindowControl aria-label="Close"><Icon name="closeBox" size={14} /></WindowControl>
            </WindowControls>
          </MenuBar>

          <ToolBar>
            <Grip />
            <DropTool $w={40} aria-label="Charts"><Icon name="lineAxis" /></DropTool>
            <DropTool $w={40} aria-label="Profiles"><Icon name="profile" /></DropTool>
            <Tool icon="dollar" />
            <Separator />
            <ToolButton>IDE</ToolButton>
            <Tool icon="bag" />
            <Tool icon="signal" />
            <Tool icon="cloud" />
            <Tool icon="globe" />
            <Separator />
            <WideTool $w={102} $active><Icon name="play" />Algo Trading</WideTool>
            <WideTool $w={94}><Icon name="newOrder" size={16} />New Order</WideTool>
            <Separator />
            <Tool icon="barsChart" />
            <Tool icon="candles" active />
            <Tool icon="zigzag" />
            <Separator />
            <Tool icon="zoomIn" />
            <Tool icon="zoomOut" />
            <Tool icon="tiles" />
            <Separator />
            <Tool icon="autoScroll" />
            <Tool icon="chartShift" />
            <Separator />
            <Tool icon="camera" />
            <Grip />
            <Tool icon="arrow" active />
            <Tool icon="crosshair" />
            <Separator />
            <Tool icon="vline" />
            <Tool icon="hline" />
            <Tool icon="trend" />
            <Tool icon="channel" />
            <Tool icon="fibo" />
            <Tool icon="text" />
            <DropTool $w={40} aria-label="Objects"><Icon name="shapes" /></DropTool>
            <Grip />
            {["M1", "M5", "M15", "M30", "H1", "H4", "D1", "W1", "MN"].map((p) => (
              <ToolButton key={p} $active={p === "H1"}>{p}</ToolButton>
            ))}
            <ToolTail>
              <ToolButton aria-label="Search"><Icon name="search" size={18} /></ToolButton>
              <AccountTool aria-label="Account"><Icon name="user" size={18} /><Notice>1</Notice></AccountTool>
              <Level><Icon name="levelUp" size={10} />LVL</Level>
              <Battery />
            </ToolTail>
          </ToolBar>

          <WorkArea>
            <SideColumn>
              <MarketWatch />
              <Navigator />
            </SideColumn>
            <ChartColumn>
              <Chart />
              <ChartTabs $h={24} $pad={2}>
                {chartTabs.map((t, i) => (
                  <ChartTab key={i} $active={i === 5} $bar={i < 4}>{t}</ChartTab>
                ))}
                <Pager>
                  <svg width="4" height="8"><path d="M4 0v8L0 4z" fill="#b0b0b0" /></svg>
                  <svg width="4" height="8"><path d="M0 0v8l4-4z" fill="#b0b0b0" /></svg>
                </Pager>
              </ChartTabs>
            </ChartColumn>
          </WorkArea>

          <Toolbox>
            <ToolboxRail>
              <IconButton aria-label="Close Toolbox"><Icon name="close" size={13} /></IconButton>
              <RailLabel>Toolbox</RailLabel>
            </ToolboxRail>
            <ToolboxBody>
              <JournalTable>
                <thead><tr><th>Time</th><th>Source</th><th>Message</th></tr></thead>
              </JournalTable>
              <Fill />
              <TabStrip $h={25} $pad={5}>
                {toolboxTabs.map((t, i) => (
                  <Tab key={t} $active={t === "Journal"} $bar={i < 10}>
                    {t}
                    {t === "Mailbox" && <MailCount>11</MailCount>}
                  </Tab>
                ))}
                <LinkGroup>
                  <ServiceLink><Icon name="bag" size={15} />Market</ServiceLink>
                  <ServiceLink $off><Icon name="signal" size={16} />Signals</ServiceLink>
                  <ServiceLink><Icon name="cloud" size={16} />VPS</ServiceLink>
                  <ServiceLink><Icon name="chip" size={16} />Tester</ServiceLink>
                </LinkGroup>
              </TabStrip>
            </ToolboxBody>
          </Toolbox>

          <StatusBar>
            <StatusCell>For Help, press F1</StatusCell>
            <StatusCell $w={128}>Default</StatusCell>
            <StatusCell $w={98} />
            <StatusCell $w={71} />
            <StatusCell $w={71} />
            <StatusCell $w={68} />
            <StatusCell $w={70} />
            <StatusCell $w={66} />
            <StatusCell $w={121}><Icon name="traffic" size={16} />23.0 / 8.1 Mb</StatusCell>
          </StatusBar>

          <Highlight $x={10} $y={310} $w={206} $h={57} />
          <ContextMenu>
            {entries.map((e, i) =>
              e === null ? (
                <MenuRule key={i} role="separator" />
              ) : (
                <li key={i}>
                  <MenuItem disabled={e.off}>
                    <ItemIcon>{e.icon && <Icon name={e.icon} size={e.icon === "check" ? 14 : 16} />}</ItemIcon>
                    {e.label}
                    {e.keys && <Shortcut>{e.keys}</Shortcut>}
                    {e.sub && <Shortcut><Icon name="submenu" size={14} /></Shortcut>}
                  </MenuItem>
                </li>
              )
            )}
          </ContextMenu>
          <Highlight $x={210} $y={133} $w={201} $h={25} />

          <Overlay width="900" height="640" viewBox="50 50 900 640" aria-hidden="true">
            <path d="M266 154v8l2-2 2 3 1-1-1-3h2z" fill="#eee" stroke="#888" />
            <path d="M155.500 378.500v15l3.500-3 3 6 2.500-1-3-6h5z" fill="#f4d820" stroke="#222" />
            <g fill="#f8c72b" stroke="#fff" strokeWidth="2" strokeLinejoin="round">
              <path d="M448 207.500L636 247.500H900Q912 247.500 911.500 260L909 326Q908 339.500 896 339.500H602Q590 339.500 589.500 328L587 258.500z" />
              <path d="M192 397L446 475.500H788Q811 475.500 810.500 498L803.500 638Q802 659.500 780 659.500H408Q387 659.500 386 638L379.500 498z" />
            </g>
          </Overlay>
          <CalloutText $x={539} $y={212} $w={320}>Right-click and open the chart.</CalloutText>
          <CalloutText $x={353} $y={486} $w={380}>Select a symbol and open the chart for that symbol.</CalloutText>
          <StepBadge $x={81} $y={278}>1</StepBadge>
          <StepBadge $x={370} $y={89}>2</StepBadge>
        </AppWindow>
      </Shadow>
    </Desktop>
  );
}
